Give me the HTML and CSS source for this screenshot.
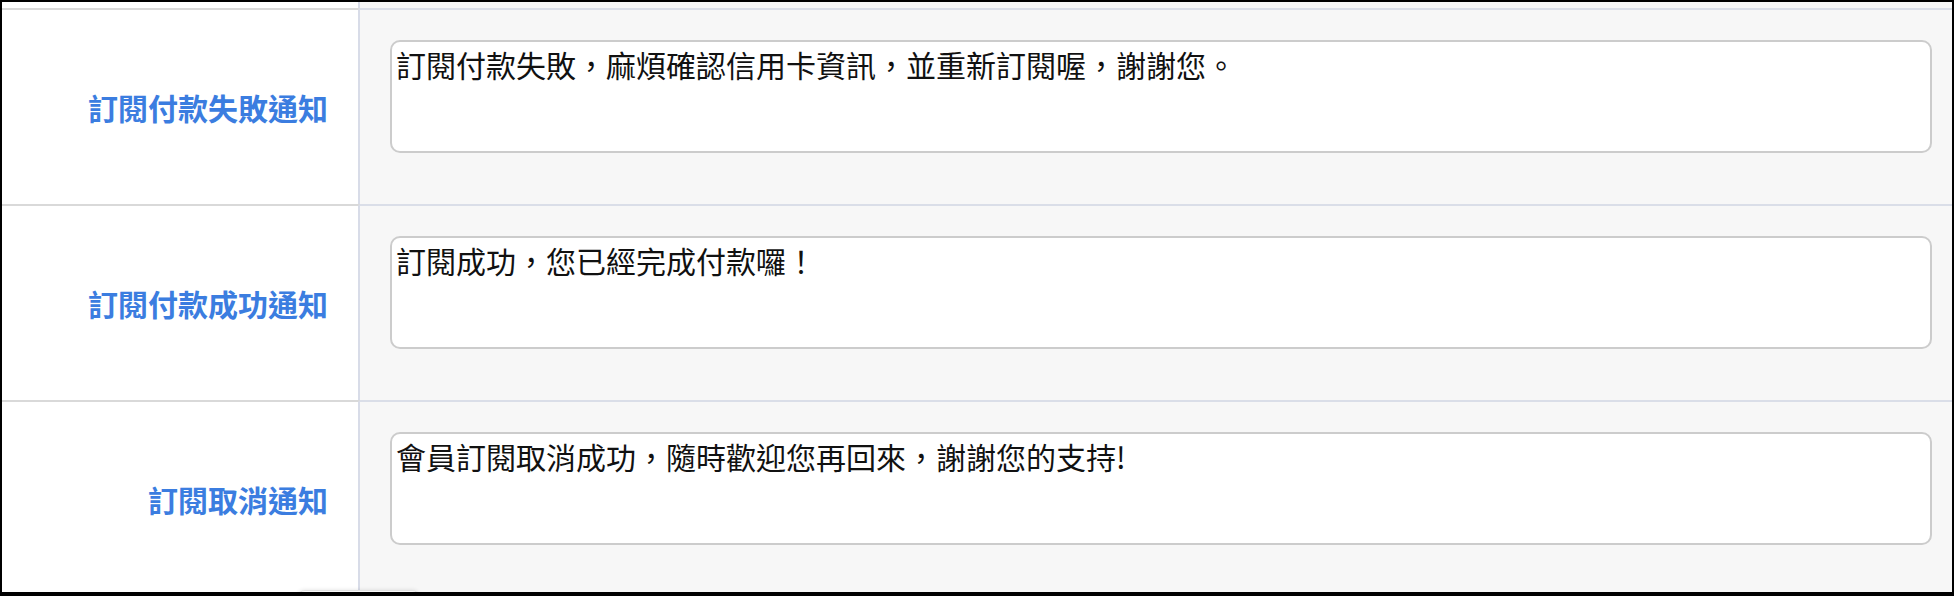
FILE: index.html
```html
<!DOCTYPE html>
<html>

<head>
  <meta name="viewport" content="width=device-width, initial-scale=1">
  <link rel="stylesheet" href="styles.css">
</head>

<body>

  <div class="page">
    <div class="row row-partial">
      <div class="label-cell"></div>
      <div class="value-cell"></div>
    </div>

    <div class="row">
      <div class="label-cell">
        <label for="payFail">訂閱付款失敗通知</label>
      </div>
      <div class="value-cell">
        <textarea id="payFail" class="message">訂閱付款失敗，麻煩確認信用卡資訊，並重新訂閱喔，謝謝您。</textarea>
      </div>
    </div>

    <div class="row">
      <div class="label-cell">
        <label for="paySuccess">訂閱付款成功通知</label>
      </div>
      <div class="value-cell">
        <textarea id="paySuccess" class="message">訂閱成功，您已經完成付款囉！</textarea>
      </div>
    </div>

    <div class="row">
      <div class="label-cell">
        <label for="cancel">訂閱取消通知</label>
      </div>
      <div class="value-cell">
        <textarea id="cancel" class="message">會員訂閱取消成功，隨時歡迎您再回來，謝謝您的支持!</textarea>
      </div>
    </div>

    <div class="peek"></div>
  </div>

</body>

</html>
```

FILE: styles.css
```css
* {
  box-sizing: border-box;
}

body {
  margin: 0;
  background-color: black;
  font-family: "Noto Sans CJK TC", "Noto Sans", sans-serif;
}

/* Visible part of the settings table */
.page {
  position: relative;
  margin: 2px 2px 4px 2px;
  height: 590px;
  overflow: hidden;
  background-color: #f7f7f7;
}

.row {
  display: grid;
  grid-template-columns: 358px 1fr;
  height: 196px;
}

.row-partial {
  height: 6px;
}

.label-cell {
  display: flex;
  align-items: center;
  justify-content: flex-end;
  padding-right: 30px;
  background-color: white;
  border-top: 2px solid #d9d9d9;
  border-right: 2px solid #d8dce8;
}

.value-cell {
  padding: 30px 20px 0 30px;
  border-top: 2px solid #dadee8;
}

.row-partial .label-cell,
.row-partial .value-cell {
  border-top: none;
}

label {
  color: #3b7de0;
  font-size: 30px;
  font-weight: bold;
  line-height: 1;
}

/* Message boxes */
.message {
  display: block;
  width: 100%;
  height: 113px;
  padding: 1px 4px;
  border: 2px solid #cccccc;
  border-radius: 10px;
  background: white;
  color: #111;
  font-family: "Noto Sans CJK TC", "Noto Sans", sans-serif;
  font-size: 30px;
  line-height: 1.4;
  resize: none;
  outline: none;
}

/* Edge of a floating box below the fold */
.peek {
  position: absolute;
  left: 295px;
  bottom: -20px;
  width: 123px;
  height: 22px;
  background: #f9f9f9;
  border: 1px solid #e2e2e2;
  border-radius: 8px;
  box-shadow: 0 0 4px rgba(0, 0, 0, 0.12);
}
```
